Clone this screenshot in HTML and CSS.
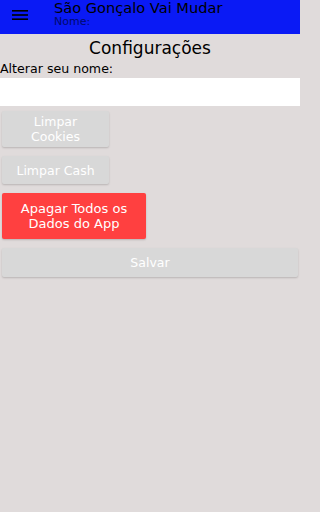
FILE: index.html
```html
<!DOCTYPE html>
<html lang="pt">
<head>
<meta charset="utf-8">
<link rel="stylesheet" href="styles.css">
</head>
<body>
<header class="topbar">
  <button class="menu" aria-label="menu">
    <svg width="16" height="10" viewBox="0 0 16 10"><rect x="0" y="0" width="16" height="1.6" fill="#000"/><rect x="0" y="4.2" width="16" height="1.6" fill="#000"/><rect x="0" y="8.4" width="16" height="1.6" fill="#000"/></svg>
  </button>
  <div class="titles">
    <div class="title">São Gonçalo Vai Mudar</div>
    <div class="subtitle">Nome:</div>
  </div>
</header>
<main class="content">
  <h1 class="heading">Configurações</h1>
  <label class="label">Alterar seu nome:</label>
  <div class="input"></div>
  <div class="actions">
    <button class="btn btn-gray btn-small">Limpar<br>Cookies</button>
    <button class="btn btn-gray btn-small">Limpar Cash</button>
    <button class="btn btn-red">Apagar Todos os<br>Dados do App</button>
    <button class="btn btn-gray btn-full">Salvar</button>
  </div>
</main>
</body>
</html>
```
FILE: styles.css
```css
html {
  background: #e0dbdb;
}
body {
  margin: 0;
  padding: 0;
  background: #e0dbdb;
  font-family: "DejaVu Sans", "Liberation Sans", sans-serif;
  width: 300px;
  height: 512px;
  overflow: hidden;
}
.topbar {
  background: #0a1af5;
  height: 34px;
  display: flex;
  align-items: flex-start;
}
.menu {
  border: 0;
  background: transparent;
  padding: 0;
  margin: 10px 0 0 12px;
  width: 16px;
  height: 10px;
  display: block;
}
.menu svg { display: block; }
.titles {
  margin-left: 26px;
  margin-top: 0;
}
.title {
  font-size: 14.6px;
  line-height: 16px;
  color: #000;
}
.subtitle {
  font-size: 11px;
  line-height: 11px;
  color: #000a6e;
}
.heading {
  margin: 3px 0 0;
  text-align: center;
  font-weight: normal;
  font-size: 17px;
  line-height: 22px;
  color: #000;
}
.label {
  display: block;
  font-size: 12.6px;
  line-height: 16px;
  margin-top: 2px;
  color: #000;
}
.input {
  background: #fff;
  height: 28px;
  margin-top: 1px;
}
.actions {
  display: flex;
  flex-direction: column;
  align-items: flex-start;
  gap: 9px;
  padding: 5px 2px 0;
}
.btn {
  border: 0;
  font-family: inherit;
  font-size: 12.5px;
  line-height: 15px;
  color: #fff;
  text-align: center;
  border-radius: 2px;
  box-shadow: 0 1px 2px rgba(0,0,0,0.18);
  padding: 0;
}
.btn-gray {
  background: #d8d8d8;
}
.btn-small {
  width: 107px;
  min-height: 28px;
  padding: 3px 0;
}
.btn-red {
  background: #ff4040;
  width: 144px;
  padding: 8px 0;
  font-size: 13px;
}
.btn-full {
  width: 296px;
  height: 29px;
}
```
